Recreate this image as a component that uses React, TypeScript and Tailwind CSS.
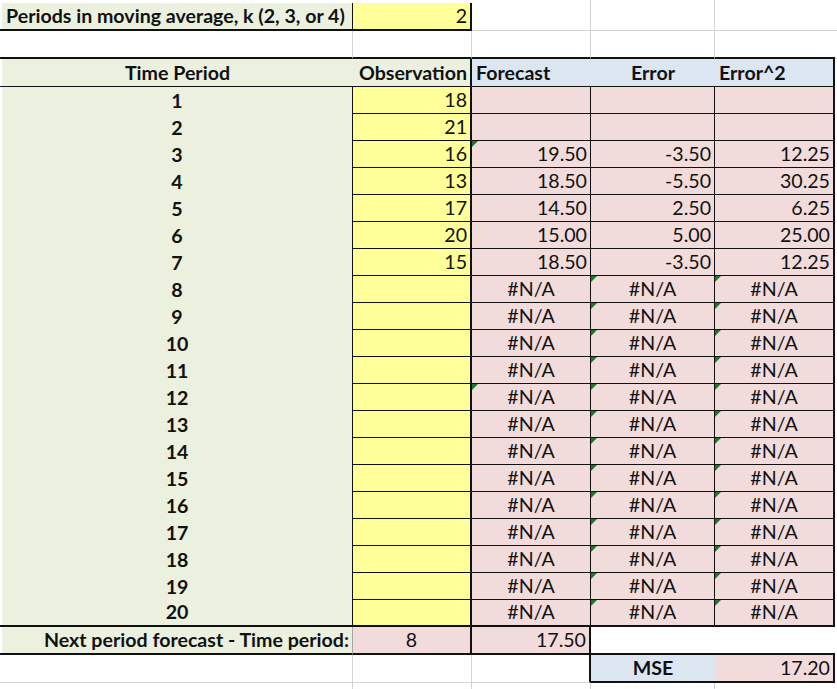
import React from "react";

type Bd = "g" | "t" | "T" | "n" | "s";
type CellSpec = {
  bg?: string;
  b?: Bd;
  r?: Bd;
  al?: "l" | "c" | "r";
  bold?: boolean;
  tri?: boolean;
  text?: string;
};

const BB: Record<Bd, string> = {
  g: "border-b border-b-[#d4d4d4]",
  s: "border-b border-b-[#a6a6a6]",
  t: "border-b border-b-[#111111]",
  T: "border-b-2 border-b-[#111111]",
  n: "",
};
const BR: Record<Bd, string> = {
  g: "border-r border-r-[#d4d4d4]",
  s: "border-r border-r-[#a6a6a6]",
  t: "border-r border-r-[#111111]",
  T: "border-r-2 border-r-[#111111]",
  n: "",
};
const AL = {
  l: "justify-start pl-[4px]",
  c: "justify-center",
  r: "justify-end pr-[3px]",
};

const GREEN = "bg-[#ebf1de]";
const YEL = "bg-[#ffff99]";
const PINK = "bg-[#f2dcdb]";
const BLUE = "bg-[#dce6f1]";
const WHITE = "bg-white";

function Cell({ c }: { c: CellSpec }) {
  const cls = [
    "relative flex items-end pb-[3px] overflow-hidden whitespace-nowrap leading-none",
    c.bg ?? WHITE,
    BB[c.b ?? "n"],
    BR[c.r ?? "n"],
    AL[c.al ?? "l"],
    c.bold ? "font-bold" : "font-normal",
  ].join(" ");
  return (
    <div className={cls}>
      {c.tri && (
        <span className="absolute left-0 top-0 h-0 w-0 border-t-[6px] border-r-[6px] border-t-[#1a7a2a] border-r-transparent" />
      )}
      {c.text && <span>{c.text}</span>}
    </div>
  );
}

const obs = [18, 21, 16, 13, 17, 20, 15];
const fc: (string | null)[] = [null, null, "19.50", "18.50", "14.50", "15.00", "18.50"];
const er: (string | null)[] = [null, null, "-3.50", "-5.50", "2.50", "5.00", "-3.50"];
const er2: (string | null)[] = [null, null, "12.25", "30.25", "6.25", "25.00", "12.25"];

export default function App() {
  const rows: CellSpec[][] = [];

  // top sliver
  rows.push([
    { b: "T", r: "g" },
    { b: "T" },
    { b: "T" },
    { b: "g", r: "g" },
    { b: "g", r: "g" },
    { b: "g" },
    { b: "g" },
  ]);

  // row 1
  rows.push([
    { b: "T", r: "g" },
    { bg: GREEN, b: "T", r: "t", al: "l", bold: true, text: "Periods in moving average, k (2, 3, or 4)" },
    { bg: YEL, b: "T", r: "T", al: "r", text: "2" },
    { b: "g", r: "g" },
    { b: "g", r: "g" },
    { b: "g" },
    { b: "g" },
  ]);

  // row 2 blank
  rows.push([
    { b: "T", r: "g" },
    { b: "T", r: "g" },
    { b: "T", r: "g" },
    { b: "T", r: "g" },
    { b: "T", r: "g" },
    { b: "T" },
    { b: "g" },
  ]);

  // header
  rows.push([
    { b: "t", r: "g" },
    { bg: GREEN, b: "t", al: "c", bold: true, text: "Time Period" },
    { bg: GREEN, b: "t", r: "T", al: "r", bold: true, text: "Observation" },
    { bg: BLUE, b: "t", al: "l", bold: true, text: "Forecast" },
    { bg: BLUE, b: "t", al: "c", bold: true, text: "Error" },
    { bg: BLUE, b: "t", r: "T", al: "l", bold: true, text: "Error^2" },
    {},
  ]);

  for (let i = 1; i <= 20; i++) {
    const last = i === 20;
    const bt: Bd = last ? "T" : "t";
    const idx = i - 1;
    const f = idx < 7 ? fc[idx] : "#N/A";
    const e = idx < 7 ? er[idx] : "#N/A";
    const e2 = idx < 7 ? er2[idx] : "#N/A";
    rows.push([
      { b: last ? "T" : "n", r: "g" },
      { bg: GREEN, b: last ? "T" : "n", r: "t", al: "c", bold: true, text: String(i) },
      { bg: YEL, b: bt, r: "T", al: "r", text: idx < 7 ? String(obs[idx]) : "" },
      { bg: PINK, b: bt, r: "t", al: f === "#N/A" ? "c" : "r", text: f ?? "", tri: i === 3 || i === 12 },
      { bg: PINK, b: bt, r: "t", al: e === "#N/A" ? "c" : "r", text: e ?? "", tri: i >= 8 },
      { bg: PINK, b: bt, r: "T", al: e2 === "#N/A" ? "c" : "r", text: e2 ?? "", tri: i >= 8 },
      {},
    ]);
  }

  // next period row
  rows.push([
    { b: "T", r: "g" },
    { bg: GREEN, b: "T", r: "s", al: "r", bold: true, text: "Next period forecast - Time period:" },
    { bg: PINK, b: "T", r: "T", al: "c", text: "8" },
    { bg: PINK, b: "T", r: "T", al: "r", text: "17.50" },
    { b: "T" },
    { b: "T" },
    {},
  ]);

  // MSE row
  rows.push([
    { b: "g", r: "g" },
    { b: "g", r: "g" },
    { b: "g", r: "g" },
    { b: "g", r: "T" },
    { bg: BLUE, b: "T", al: "c", bold: true, text: "MSE" },
    { bg: PINK, b: "T", r: "T", al: "r", text: "17.20" },
    {},
  ]);

  // rest
  rows.push([
    { r: "g" },
    { r: "g" },
    { r: "g" },
    { r: "g" },
    { r: "g" },
    {},
    {},
  ]);

  return (
    <div className="h-[689px] w-[837px] overflow-hidden bg-white font-['Lato',sans-serif] text-[19.6px] text-[#111111]">
      <div className="grid h-full w-full grid-cols-[2px_351px_119px_119px_124px_120px_2px] grid-rows-[3px_28px_28px_28px_repeat(20,27px)_28px_28px_1fr]">
        {rows.flatMap((row, ri) => row.map((c, ci) => <Cell key={`${ri}-${ci}`} c={c} />))}
      </div>
    </div>
  );
}
